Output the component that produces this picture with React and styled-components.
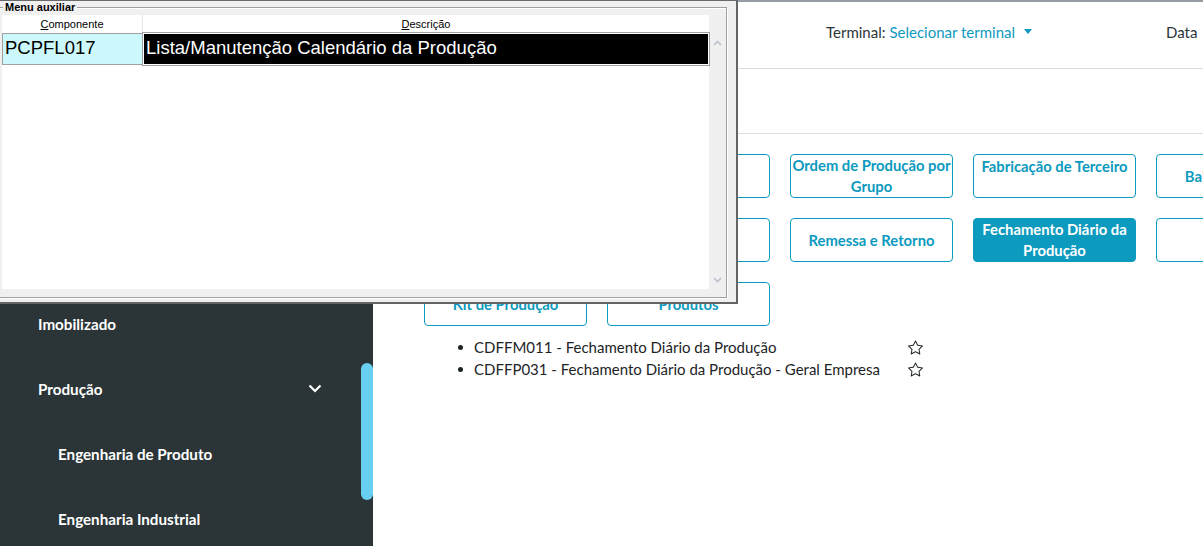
import React from 'react';
import styled, { createGlobalStyle } from 'styled-components';
import { BsStar } from 'react-icons/bs';

const navItems = [
  { label: 'Compras' },
  { label: 'Estoque' },
  { label: 'Faturamento' },
  { label: 'Financeiro' },
  { label: 'Imobilizado' },
  { label: 'Produção', open: true },
  { label: 'Engenharia de Produto', sub: true },
  { label: 'Engenharia Industrial', sub: true },
];

// \n marks where the original label breaks
const buttons = [
  { label: 'Ordem de Produção' },
  { label: 'Roteiro' },
  { label: 'Ordem de Produção por\nGrupo' },
  { label: 'Fabricação de Terceiro', top: true },
  { label: 'Baixa de Ordem' },
  { label: 'Requisição' },
  { label: 'Apontamento' },
  { label: 'Remessa e Retorno' },
  { label: 'Fechamento Diário da\nProdução', active: true },
  { label: 'Consumo' },
  { label: 'Kit de Produção' },
  { label: 'Produtos' },
];

const programs = [
  'CDFFM011 - Fechamento Diário da Produção',
  'CDFFP031 - Fechamento Diário da Produção - Geral Empresa',
];

const GlobalStyle = createGlobalStyle`
  html, body {
    margin: 0;
    padding: 0;
    width: 1203px;
    height: 546px;
    overflow: hidden;
    background: #fff;
  }
  body {
    font-family: Lato, 'Open Sans', sans-serif;
  }
  * { box-sizing: border-box; }
`;

export default function App() {
  return (
    <Page>
      <GlobalStyle />
      <Sidebar>
        {navItems.map((item) => (
          <NavItem key={item.label} $sub={item.sub}>
            {item.label}
            {item.open && (
              <svg width="14" height="9" viewBox="0 0 14 9">
                <path d="M1.5 1.5 L7 7 L12.5 1.5" fill="none" stroke="#fff" strokeWidth="2.2" />
              </svg>
            )}
          </NavItem>
        ))}
        <Thumb />
      </Sidebar>

      <Main>
        <Header>
          <HeaderGroup>
            Terminal: <TerminalLink>Selecionar terminal</TerminalLink>
            <Caret />
          </HeaderGroup>
          <HeaderGroup>Data</HeaderGroup>
        </Header>
        <SubBar />
        <Content>
          <ButtonGrid>
            {buttons.map((b) => (
              <MenuButton key={b.label} $active={b.active} $top={b.top}>
                {b.label}
              </MenuButton>
            ))}
          </ButtonGrid>
          <ProgramList>
            {programs.map((p) => (
              <ProgramItem key={p}>
                <ProgramText>{p}</ProgramText>
                <BsStar size={15} color="#1d2426" />
              </ProgramItem>
            ))}
          </ProgramList>
        </Content>
      </Main>

      <Dialog>
        <GroupBox>
          <Legend>Menu auxiliar</Legend>
          <GridWrap>
            <Table>
              <HeadRow>
                <HeadCell $w={141}>
                  <u>C</u>omponente
                </HeadCell>
                <HeadCell>
                  <u>D</u>escrição
                </HeadCell>
              </HeadRow>
              <Row>
                <CodeCell>PCPFL017</CodeCell>
                <DescCell>Lista/Manutenção Calendário da Produção</DescCell>
              </Row>
            </Table>
            <ScrollTrack>
              <svg width="9" height="6" viewBox="0 0 9 6">
                <path d="M1 5 L4.5 1.5 L8 5" fill="none" stroke="#b9c0cc" strokeWidth="1.6" />
              </svg>
              <svg width="9" height="6" viewBox="0 0 9 6">
                <path d="M1 1 L4.5 4.5 L8 1" fill="none" stroke="#b9c0cc" strokeWidth="1.6" />
              </svg>
            </ScrollTrack>
          </GridWrap>
        </GroupBox>
      </Dialog>
    </Page>
  );
}

const Page = styled.div`
  position: relative;
  display: flex;
  width: 1203px;
  height: 546px;
  overflow: hidden;
`;

const Sidebar = styled.nav`
  position: relative;
  flex: 0 0 373px;
  background: #2b3537;
  padding-top: 31px;
  display: flex;
  flex-direction: column;
`;

const NavItem = styled.div`
  height: 65px;
  flex: 0 0 65px;
  display: flex;
  align-items: center;
  justify-content: space-between;
  padding-left: ${(p) => (p.$sub ? 58 : 38)}px;
  padding-right: 51px;
  color: #fff;
  font-size: 15.2px;
  font-weight: 700;
  white-space: nowrap;
`;

const Thumb = styled.div`
  position: absolute;
  right: 0;
  top: 363px;
  width: 12px;
  height: 137px;
  border-radius: 6px;
  background: #68cff1;
`;

const Main = styled.main`
  flex: 1;
  display: flex;
  flex-direction: column;
  min-width: 0;
`;

const Header = styled.header`
  height: 69px;
  flex: 0 0 69px;
  border-top: 2px solid #959ca5;
  border-bottom: 1px solid #dcdcdc;
  display: flex;
  align-items: center;
  padding: 0 0 7px 453px;
  gap: 134px;
  font-size: 15px;
  color: #2c3537;
  white-space: nowrap;
`;

const HeaderGroup = styled.div`
  display: flex;
  align-items: center;
  gap: 4px;
`;

const TerminalLink = styled.span`
  color: #0c9abe;
`;

const Caret = styled.span`
  width: 0;
  height: 0;
  margin-left: 5px;
  border-left: 4px solid transparent;
  border-right: 4px solid transparent;
  border-top: 5px solid #0c9abe;
`;

const SubBar = styled.div`
  height: 65px;
  flex: 0 0 65px;
  border-bottom: 1px solid #dcdcdc;
`;

const Content = styled.section`
  padding: 20px 0 0 51px;
`;

const ButtonGrid = styled.div`
  display: grid;
  grid-template-columns: repeat(5, 163px);
  grid-auto-rows: 44px;
  gap: 20px;
`;

const MenuButton = styled.button`
  display: flex;
  align-items: ${(p) => (p.$top ? 'flex-start' : 'center')};
  justify-content: center;
  padding: ${(p) => (p.$top ? '1px 0 0' : '0')};
  border: 1px solid #0c9abe;
  border-radius: 4px;
  background: ${(p) => (p.$active ? '#0c9abe' : '#fff')};
  color: ${(p) => (p.$active ? '#fff' : '#0c9abe')};
  font-family: Lato, 'Open Sans', sans-serif;
  font-size: 14.8px;
  font-weight: 700;
  line-height: 21px;
  text-align: center;
  white-space: pre;
  overflow: visible;
`;

const ProgramList = styled.ul`
  list-style: none;
  margin: 10px 0 0;
  padding: 0;
`;

const ProgramItem = styled.li`
  display: flex;
  align-items: center;
  height: 22px;
  font-size: 15px;
  color: #1d2426;

  &::before {
    content: '';
    width: 5px;
    height: 5px;
    border-radius: 50%;
    background: #1d2426;
    margin: 0 11px 0 34px;
  }
`;

const ProgramText = styled.span`
  width: 434px;
  white-space: nowrap;
  padding-bottom: 1px;
`;

const Dialog = styled.div`
  position: absolute;
  top: 0;
  left: 0;
  width: 738px;
  height: 304px;
  background: #f0f0f0;
  border-top: 1px solid #6a6a6a;
  border-right: 2px solid #646464;
  border-bottom: 2px solid #646464;
  padding: 6px 9px 0 0;
  font-family: 'Liberation Sans', Arial, sans-serif;
  z-index: 10;
`;

const GroupBox = styled.div`
  position: relative;
  height: 291px;
  border: 1px solid #a0a0a0;
  border-left: none;
  box-shadow: 1px 1px 0 #fff, inset 0 1px 0 #fff;
  padding: 7px 1px 0 2px;
`;

const Legend = styled.span`
  position: absolute;
  top: -7px;
  left: 3px;
  padding: 0 2px;
  background: #f0f0f0;
  font-size: 11px;
  font-weight: 700;
  line-height: 13px;
  color: #000;
`;

const GridWrap = styled.div`
  display: flex;
  height: 274px;
`;

const Table = styled.div`
  width: 707px;
  background: #fff;
`;

const HeadRow = styled.div`
  display: flex;
  height: 18px;
`;

const HeadCell = styled.div`
  flex: ${(p) => (p.$w ? `0 0 ${p.$w}px` : '1')};
  text-align: center;
  font-size: 11px;
  line-height: 18px;
  color: #000;
  border-right: ${(p) => (p.$w ? '1px solid #e6e6e6' : 'none')};
`;

const Row = styled.div`
  display: flex;
  height: 32px;
`;

const CodeCell = styled.div`
  flex: 0 0 141px;
  background: #ccf8fc;
  border: 1px solid #a0a0a0;
  padding-left: 2px;
  font-size: 18.5px;
  line-height: 28px;
  color: #000;
`;

const DescCell = styled.div`
  flex: 1;
  background: #000;
  border: 1px solid #fff;
  box-shadow: 0 0 0 1px #a0a0a0;
  padding-left: 2px;
  font-size: 18.5px;
  line-height: 28px;
  color: #fff;
  white-space: nowrap;
`;

const ScrollTrack = styled.div`
  flex: 1;
  display: flex;
  flex-direction: column;
  align-items: center;
  justify-content: space-between;
  padding: 25px 0 6px;
`;
